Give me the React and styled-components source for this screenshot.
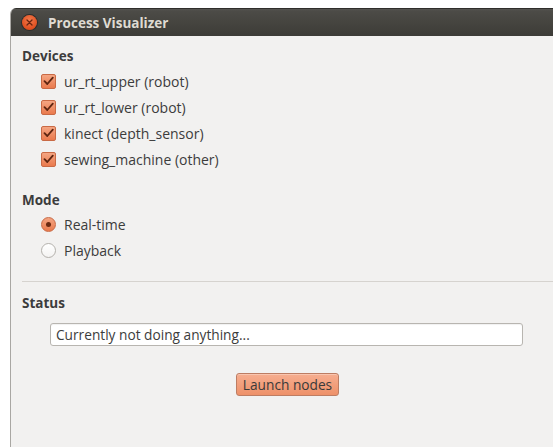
import React, { useState } from "react";
import styled, { createGlobalStyle } from "styled-components";

const Global = createGlobalStyle`
  html, body { margin: 0; padding: 0; background: #ffffff; }
  body { font-family: "Open Sans", "Noto Sans", sans-serif; overflow: hidden; }
`;

const Screen = styled.div`
  width: 553px;
  height: 447px;
  padding: 8px 0 0 10px;
  box-sizing: border-box;
  overflow: hidden;
`;

const Window = styled.div`
  width: 560px;
  height: 439px;
  display: flex;
  flex-direction: column;
  border-radius: 6px 0 0 0;
  overflow: hidden;
  background: #f2f1f0;
  border-left: 1px solid #a9a7a3;
  box-sizing: border-box;
`;

const TitleBar = styled.div`
  height: 28px;
  flex: none;
  display: flex;
  align-items: center;
  gap: 11px;
  padding-left: 11px;
  background: linear-gradient(#555450 0, #4c4b47 2px, #45443f 14px, #3c3b37 28px);
  border-top: 1px solid #2f2e2b;
  box-sizing: border-box;
`;

const CloseButton = styled.span`
  width: 15px;
  height: 15px;
  border-radius: 50%;
  background: radial-gradient(circle at 50% 35%, #f27a4c, #df4e1f 70%, #c2401a);
  box-shadow: 0 0 0 1px #2e2d2a;
  display: flex;
  align-items: center;
  justify-content: center;
`;

const Title = styled.span`
  color: #dfdbd2;
  font-weight: 700;
  font-size: 13.5px;
`;

const Body = styled.div`
  flex: 1;
  display: flex;
  flex-direction: column;
  padding: 12px 0 0 11px;
  color: #3c3c3c;
  font-size: 14px;
`;

const SectionTitle = styled.div`
  font-weight: 700;
  font-size: 13.5px;
  color: #3c3c3c;
  line-height: 16px;
  margin-bottom: ${(p) => p.$gap}px;
`;

const Options = styled.div`
  display: flex;
  flex-direction: column;
  padding-left: 19px;
  margin-bottom: ${(p) => p.$after || 0}px;
`;

const OptionRow = styled.label`
  height: 26px;
  display: flex;
  align-items: center;
  gap: 8px;
  color: #3c3c3c;
  font-size: 14px;
  cursor: default;
`;

const CheckBox = styled.span`
  width: 13px;
  height: 13px;
  border-radius: 2px;
  border: 1px solid #c96a45;
  background: linear-gradient(#f4a582, #ea7a4d);
  display: flex;
  align-items: center;
  justify-content: center;
  flex: none;
`;

const Radio = styled.span`
  width: 13px;
  height: 13px;
  border-radius: 50%;
  flex: none;
  display: flex;
  align-items: center;
  justify-content: center;
  border: 1px solid ${(p) => (p.$on ? "#c96a45" : "#b3b0ab")};
  background: ${(p) =>
    p.$on ? "linear-gradient(#f4a582, #ea7a4d)" : "linear-gradient(#ffffff, #f4f3f2)"};
  &::after {
    content: "";
    display: ${(p) => (p.$on ? "block" : "none")};
    width: 5px;
    height: 5px;
    border-radius: 50%;
    background: #6b2a12;
  }
`;

const Separator = styled.hr`
  margin: 0 0 13px 0;
  border: none;
  border-top: 1px solid #d6d3cf;
  height: 0;
`;

const StatusField = styled.div`
  margin: 12px 0 0 28px;
  width: 473px;
  height: 23px;
  box-sizing: border-box;
  border: 1px solid #b8b5b0;
  border-radius: 3px;
  background: #ffffff;
  display: flex;
  align-items: center;
  padding-left: 5px;
  font-size: 13.7px;
  color: #3c3c3c;
  box-shadow: inset 0 1px 1px rgba(0, 0, 0, 0.06);
`;

const ButtonRow = styled.div`
  display: flex;
  justify-content: center;
  width: 531px;
  margin-top: 27px;
`;

const LaunchButton = styled.button`
  height: 23px;
  width: 103px;
  padding: 0;
  border: 1px solid #bd7d63;
  border-radius: 3px;
  background: linear-gradient(#f6ae90, #ee9169);
  color: #3a3a3a;
  font-family: inherit;
  font-size: 13.7px;
  line-height: 20px;
  box-shadow: inset 0 1px 0 rgba(255, 255, 255, 0.3);
`;

const Check = () => (
  <svg width="11" height="10" viewBox="0 0 11 10">
    <path d="M1.5 5.2 L4.3 8 L9.8 1.6" fill="none" stroke="#5e2510" strokeWidth="1.8" strokeLinecap="round" strokeLinejoin="round" />
  </svg>
);

const CloseX = () => (
  <svg width="7" height="7" viewBox="0 0 7 7">
    <path d="M1 1 L6 6 M6 1 L1 6" stroke="#6a2510" strokeWidth="1.3" strokeLinecap="round" />
  </svg>
);

const devices = [
  "ur_rt_upper (robot)",
  "ur_rt_lower (robot)",
  "kinect (depth_sensor)",
  "sewing_machine (other)",
];

export default function App() {
  const [mode] = useState("realtime");
  return (
    <>
      <Global />
      <Screen>
        <Window>
          <TitleBar>
            <CloseButton>
              <CloseX />
            </CloseButton>
            <Title>Process Visualizer</Title>
          </TitleBar>
          <Body>
            <SectionTitle $gap={4}>Devices</SectionTitle>
            <Options $after={20}>
              {devices.map((d) => (
                <OptionRow key={d}>
                  <CheckBox>
                    <Check />
                  </CheckBox>
                  {d}
                </OptionRow>
              ))}
            </Options>
            <SectionTitle $gap={3}>Mode</SectionTitle>
            <Options $after={18}>
              <OptionRow>
                <Radio $on={mode === "realtime"} />
                Real-time
              </OptionRow>
              <OptionRow>
                <Radio $on={mode === "playback"} />
                Playback
              </OptionRow>
            </Options>
            <Separator />
            <SectionTitle $gap={0}>Status</SectionTitle>
            <StatusField>Currently not doing anything...</StatusField>
            <ButtonRow>
              <LaunchButton>Launch nodes</LaunchButton>
            </ButtonRow>
          </Body>
        </Window>
      </Screen>
    </>
  );
}
